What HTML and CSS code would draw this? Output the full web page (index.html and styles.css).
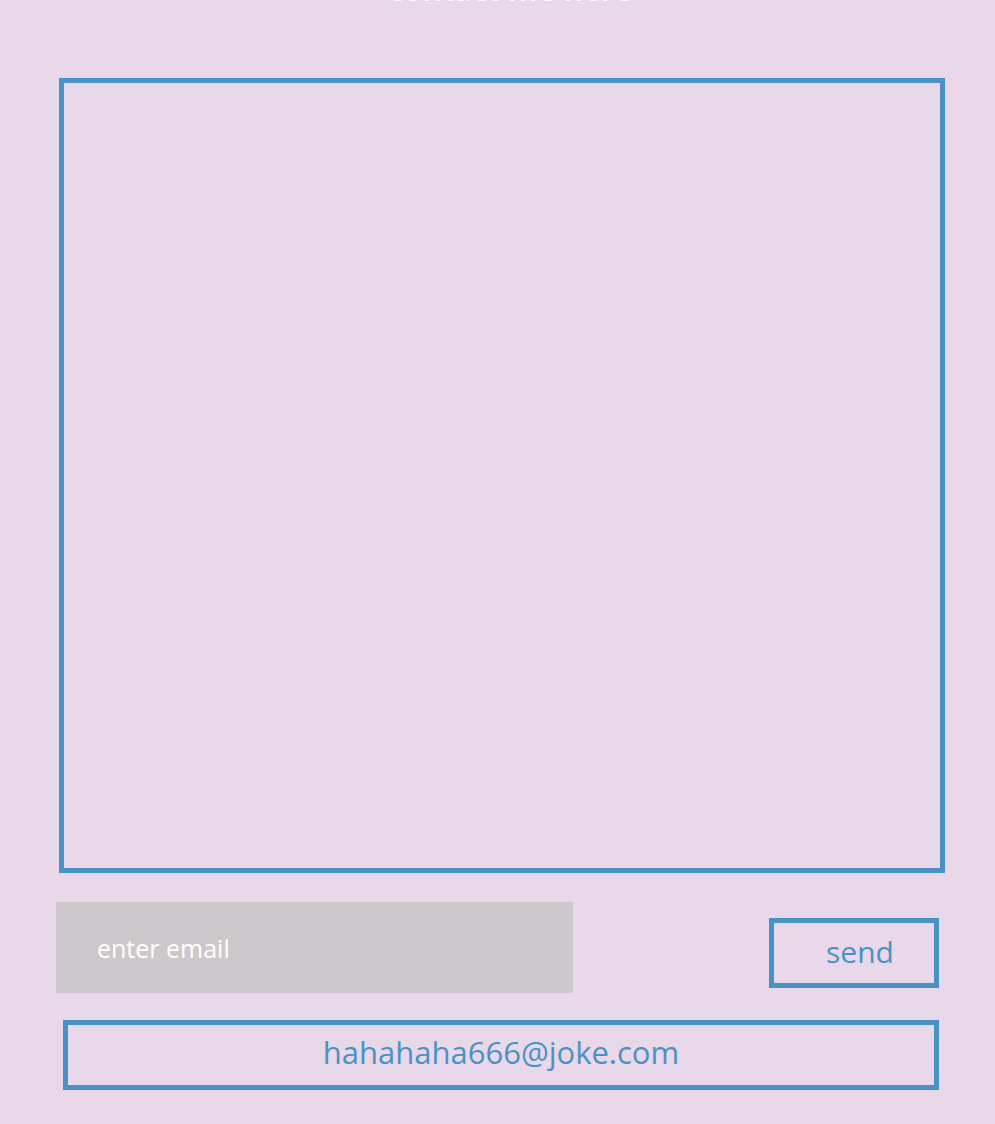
FILE: index.html
```html
<!DOCTYPE html>
<html lang="en">
<head>
<meta charset="utf-8">
<title>Contact</title>
<link rel="stylesheet" href="styles.css">
</head>
<body>
<main class="page">
  <h1 class="title">contact me here</h1>
  <div class="message-box"></div>
  <div class="form-row">
    <div class="email-input">enter email</div>
    <div class="send-btn">send</div>
  </div>
  <div class="contact-box">hahahaha666@joke.com</div>
</main>
</body>
</html>
```
FILE: styles.css
```css
html, body {
  margin: 0;
  padding: 0;
  background: #e9d7ea;
}

.page {
  width: 995px;
  min-height: 1124px;
  font-family: "Open Sans", "Noto Sans", sans-serif;
  font-weight: 500;
  overflow: hidden;
}

.title {
  margin: -29.5px 0 0 0;
  height: 36px;
  line-height: 36px;
  font-size: 31px;
  font-weight: 600;
  color: #ffffff;
  text-align: center;
  padding-left: 25px;
}

.message-box {
  margin: 71.5px 0 0 59px;
  width: 876px;
  height: 785px;
  border: 5px solid #4993c4;
}

.form-row {
  display: flex;
  align-items: flex-start;
  margin-top: 29px;
}

.email-input {
  margin-left: 56px;
  width: 476px;
  height: 91px;
  padding-left: 41px;
  background: #cdc8cc;
  color: #ffffff;
  font-size: 25px;
  display: flex;
  align-items: center;
}

.send-btn {
  margin: 16px 0 0 196px;
  width: 108px;
  height: 58px;
  padding: 0 0 2px 52px;
  border: 5px solid #4993c4;
  color: #4993c4;
  font-size: 30px;
  display: flex;
  align-items: center;
  line-height: 1;
}

.contact-box {
  margin: 27px 0 0 63px;
  width: 866px;
  height: 60px;
  border: 5px solid #4993c4;
  color: #4993c4;
  font-size: 31px;
  line-height: 54px;
  text-align: center;
}
```
